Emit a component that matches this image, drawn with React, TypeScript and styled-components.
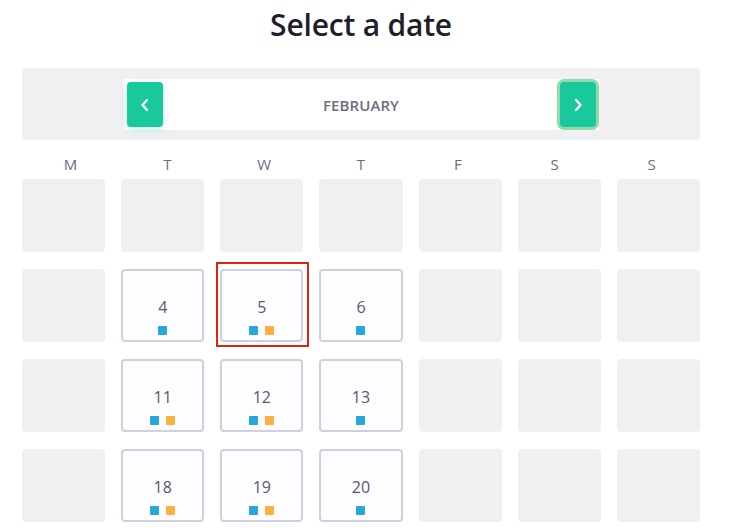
import React from "react";
import styled, { createGlobalStyle } from "styled-components";

const GlobalStyle = createGlobalStyle`
  html, body {
    margin: 0;
    padding: 0;
    background: #ffffff;
  }
  body {
    font-family: "Open Sans", "Noto Sans", sans-serif;
  }
`;

const Page = styled.div`
  width: 678px;
  margin-left: 22px;
  padding-top: 7px;
`;

const Title = styled.h1`
  margin: 0;
  font-size: 30px;
  line-height: 36px;
  font-weight: 600;
  color: #1e1e2d;
  text-align: center;
  letter-spacing: -0.2px;
`;

const NavBar = styled.div`
  margin-top: 25px;
  height: 72px;
  box-sizing: border-box;
  padding: 11px 0 10px;
  background: #f0f0f3;
  border-radius: 4px;
  display: flex;
  justify-content: center;
`;

const MonthBar = styled.div`
  width: 475px;
  height: 51px;
  box-sizing: border-box;
  padding: 3px;
  background: #ffffff;
  display: flex;
  align-items: center;
  justify-content: space-between;
`;

const NavButton = styled.button<{ $focused?: boolean }>`
  width: 36px;
  height: 45px;
  padding: 0;
  border: none;
  border-radius: 4px;
  background: #19c89d;
  display: flex;
  align-items: center;
  justify-content: center;
  cursor: pointer;
  box-shadow: ${(p) =>
    p.$focused
      ? "0 0 0 3px #93dbaa"
      : "0 3px 8px rgba(25, 200, 157, 0.22)"};
`;

const MonthLabel = styled.span`
  font-size: 15px;
  font-weight: 600;
  color: #6c6c82;
  letter-spacing: 0.1px;
`;

const WeekHeader = styled.div`
  margin-top: 14px;
  display: grid;
  grid-template-columns: repeat(7, 1fr);
`;

const WeekDay = styled.span`
  text-align: center;
  font-size: 15px;
  line-height: 20px;
  font-weight: 500;
  color: #6c6c82;
`;

const Grid = styled.div`
  margin-top: 5px;
  display: grid;
  grid-template-columns: repeat(7, 1fr);
  grid-auto-rows: 73px;
  column-gap: 16px;
  row-gap: 17px;
`;

const Slot = styled.div`
  position: relative;
`;

const EmptyCell = styled.div`
  height: 100%;
  background: #f0f0f3;
  border-radius: 4px;
`;

const DayCell = styled.div`
  height: 100%;
  box-sizing: border-box;
  border: 2px solid #cfcfe0;
  border-radius: 4px;
  background: #fdfdff;
  display: flex;
  flex-direction: column;
  align-items: center;
  justify-content: flex-end;
  padding-bottom: 5px;
  gap: 9px;
  cursor: pointer;
`;

const DayNumber = styled.span`
  font-size: 16px;
  line-height: 20px;
  font-weight: 500;
  color: #58586c;
`;

const Markers = styled.div`
  display: flex;
  gap: 7px;
`;

const Marker = styled.span<{ $color: string }>`
  width: 9px;
  height: 9px;
  border-radius: 1px;
  background: ${(p) => p.$color};
`;

const Highlight = styled.div`
  position: absolute;
  top: -7px;
  left: -4px;
  right: -6px;
  bottom: -5px;
  border: 2.5px solid #e4220c;
  pointer-events: none;
`;

const Chevron = ({ dir }: { dir: "left" | "right" }) => (
  <svg width="10" height="14" viewBox="0 0 10 14" fill="none">
    <path
      d={dir === "left" ? "M7 2 L2.5 7 L7 12" : "M3 2 L7.5 7 L3 12"}
      stroke="#ffffff"
      strokeWidth="2.4"
      strokeLinecap="round"
      strokeLinejoin="round"
    />
  </svg>
);

type Day = { n: number; orange: boolean; selected?: boolean } | null;

const BLUE = "#27a7df";
const ORANGE = "#fcb040";

const rows: Day[][] = [
  [null, null, null, null, null, null, null],
  [
    null,
    { n: 4, orange: false },
    { n: 5, orange: true, selected: true },
    { n: 6, orange: false },
    null,
    null,
    null,
  ],
  [
    null,
    { n: 11, orange: true },
    { n: 12, orange: true },
    { n: 13, orange: false },
    null,
    null,
    null,
  ],
  [
    null,
    { n: 18, orange: true },
    { n: 19, orange: true },
    { n: 20, orange: false },
    null,
    null,
    null,
  ],
];

const weekDays = ["M", "T", "W", "T", "F", "S", "S"];

export default function App() {
  return (
    <>
      <GlobalStyle />
      <Page>
        <Title>Select a date</Title>
        <NavBar>
          <MonthBar>
            <NavButton aria-label="Previous month">
              <Chevron dir="left" />
            </NavButton>
            <MonthLabel>FEBRUARY</MonthLabel>
            <NavButton $focused aria-label="Next month">
              <Chevron dir="right" />
            </NavButton>
          </MonthBar>
        </NavBar>
        <WeekHeader>
          {weekDays.map((d, i) => (
            <WeekDay key={i}>{d}</WeekDay>
          ))}
        </WeekHeader>
        <Grid>
          {rows.flatMap((row, r) =>
            row.map((day, c) => (
              <Slot key={`${r}-${c}`}>
                {day ? (
                  <DayCell>
                    <DayNumber>{day.n}</DayNumber>
                    <Markers>
                      <Marker $color={BLUE} />
                      {day.orange && <Marker $color={ORANGE} />}
                    </Markers>
                  </DayCell>
                ) : (
                  <EmptyCell />
                )}
                {day?.selected && <Highlight />}
              </Slot>
            ))
          )}
        </Grid>
      </Page>
    </>
  );
}
